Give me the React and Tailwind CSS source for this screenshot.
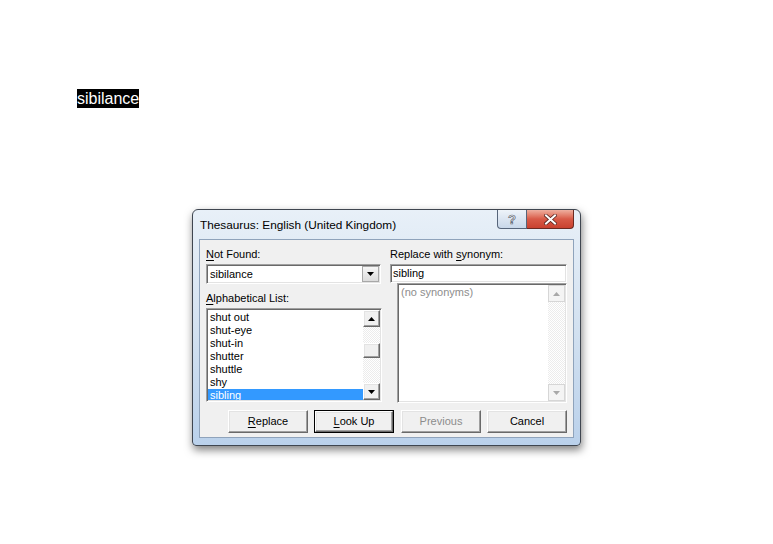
import React from "react";

const sunken =
  "border border-t-[#a0a0a0] border-l-[#a0a0a0] border-r-white border-b-white shadow-[inset_1px_1px_#696969,inset_-1px_-1px_#e3e3e3]";
const raised =
  "border border-t-white border-l-white border-r-[#696969] border-b-[#696969] shadow-[inset_-1px_-1px_#a0a0a0,inset_1px_1px_#e3e3e3] bg-[#f0f0f0]";
const track =
  "bg-[image:repeating-conic-gradient(#ececec_0%_25%,#ffffff_0%_50%)] bg-[length:2px_2px]";

function Tri({ up, color = "#000" }) {
  return (
    <svg width="7" height="4" viewBox="0 0 7 4">
      <polygon points={up ? "0,4 7,4 3.5,0" : "0,0 7,0 3.5,4"} fill={color} />
    </svg>
  );
}

function ArrowBtn({ up, disabled }) {
  return (
    <div
      className={
        disabled
          ? "w-[17px] h-[17px] flex items-center justify-center border border-[#d6d6d6] bg-[#f4f4f4]"
          : "w-[17px] h-[17px] flex items-center justify-center " + raised
      }
    >
      <Tri up={up} color={disabled ? "#a8a8a8" : "#000"} />
    </div>
  );
}

function PushBtn({ children, def, disabled }) {
  const inner = (
    <div
      className={
        "flex-1 flex items-center justify-center " +
        raised +
        (disabled ? " text-[#8c8c8c]" : " text-black")
      }
    >
      {children}
    </div>
  );
  if (def) {
    return (
      <div className="w-[80px] h-[23px] flex border border-black">{inner}</div>
    );
  }
  return <div className="w-[80px] h-[23px] flex">{inner}</div>;
}

export default function App() {
  const items = ["shut out", "shut-eye", "shut-in", "shutter", "shuttle", "shy"];
  return (
    <div className="w-[773px] h-[544px] bg-white flex flex-col items-start overflow-hidden font-['Liberation_Sans',Arial,sans-serif]">
      <div className="ml-[77px] mt-[89px] h-[19px] w-[62px] overflow-hidden bg-black text-white text-[16px] leading-[19px] whitespace-nowrap">
        sibilance
      </div>

      <div className="ml-[192px] mt-[101px] w-[389px] h-[237px] flex flex-col border border-[#3f4650] rounded-t-[6px] rounded-b-[4px] bg-gradient-to-b from-[#e8f0f8] via-[#d3e1f0] to-[#bad1eb] shadow-[1px_4px_9px_rgba(0,0,0,0.5)]">
        {/* title bar */}
        <div className="h-[29px] flex items-start pl-[7px] pr-[6px]">
          <div className="self-center mt-[1px] text-[11.8px] leading-[15px] text-black flex-1 whitespace-nowrap">
            Thesaurus: English (United Kingdom)
          </div>
          <div className="flex">
            <div className="w-[30px] h-[19px] border border-t-0 border-[#56657a] rounded-bl-[4px] bg-gradient-to-b from-[#eef3f9] to-[#c8d7e9] flex items-center justify-center">
              <span className="text-[13px] leading-[13px] font-bold text-[#f7f7f7] [-webkit-text-stroke:0.7px_#5c6470]">
                ?
              </span>
            </div>
            <div className="w-[47px] h-[19px] border border-t-0 border-l-0 border-[#6b2a22] rounded-br-[4px] bg-gradient-to-b from-[#eeaf9f] via-[#d85a47] to-[#c9412f] flex items-center justify-center">
              <svg width="13" height="11" viewBox="0 0 13 11">
                <path d="M2 1.5 L11 9.5 M11 1.5 L2 9.5" stroke="#5a2620" strokeWidth="3.6" strokeLinecap="square" />
                <path d="M2 1.5 L11 9.5 M11 1.5 L2 9.5" stroke="#ffffff" strokeWidth="2" strokeLinecap="square" />
              </svg>
            </div>
          </div>
        </div>

        {/* client area */}
        <div className="mx-[6px] w-[375px] h-[199px] border border-[#8fa3bb] bg-[#f0f0f0] flex flex-col text-[11px] leading-[15px] text-black">
          <div className="flex pt-[7px] pl-[6px] gap-[8px]">
            {/* left column */}
            <div className="w-[176px] flex flex-col">
              <div className="h-[15px]">
                <u className="underline-offset-[2px]">N</u>ot Found:
              </div>
              <div className={"mt-[2px] w-[175px] h-[20px] bg-white flex items-stretch " + sunken}>
                <div className="flex-1 pl-[3px] pt-[2px]">sibilance</div>
                <div className="my-[1px] mr-[1px] w-[17px] flex items-center justify-center border border-[#a8a8a8] bg-gradient-to-b from-[#f6f6f6] to-[#dcdcdc]">
                  <Tri />
                </div>
              </div>
              <div className="mt-[7px] h-[15px]">
                <u className="underline-offset-[2px]">A</u>lphabetical List:
              </div>
              <div className={"mt-[2px] w-[176px] h-[94px] bg-white flex p-[1px] overflow-hidden " + sunken}>
                <div className="flex-1 flex flex-col overflow-hidden pt-[1px]">
                  {items.map((t) => (
                    <div key={t} className="h-[13px] leading-[13px] pl-[2px] shrink-0">
                      {t}
                    </div>
                  ))}
                  <div className="h-[13px] leading-[13px] pl-[2px] shrink-0 bg-[#3399ff] text-white">
                    sibling
                  </div>
                </div>
                <div className={"w-[17px] flex flex-col " + track}>
                  <ArrowBtn up />
                  <div className="h-[16px]" />
                  <div className={"h-[15px] " + raised} />
                  <div className="flex-1" />
                  <ArrowBtn />
                </div>
              </div>
            </div>

            {/* right column */}
            <div className="w-[177px] flex flex-col">
              <div className="h-[15px]">
                Replace with <u className="underline-offset-[2px]">s</u>ynonym:
              </div>
              <div className={"mt-[2px] w-[177px] h-[19px] bg-white pl-[2px] pt-[1px] " + sunken}>
                sibling
              </div>
              <div className={"ml-[7px] w-[170px] h-[120px] bg-white flex p-[1px] " + sunken}>
                <div className="flex-1 pl-[2px] text-[#8d8d8d]">(no synonyms)</div>
                <div className={"w-[17px] flex flex-col justify-between " + track}>
                  <ArrowBtn up disabled />
                  <ArrowBtn disabled />
                </div>
              </div>
            </div>
          </div>

          {/* buttons */}
          <div className="mt-[7px] flex justify-end pr-[6px]">
            <PushBtn>
              <span>
                <u className="underline-offset-[2px]">R</u>eplace
              </span>
            </PushBtn>
            <div className="w-[6px]" />
            <PushBtn def>
              <span>
                <u className="underline-offset-[2px]">L</u>ook Up
              </span>
            </PushBtn>
            <div className="w-[7px]" />
            <PushBtn disabled>Previous</PushBtn>
            <div className="w-[6px]" />
            <PushBtn>Cancel</PushBtn>
          </div>
        </div>
      </div>
    </div>
  );
}
